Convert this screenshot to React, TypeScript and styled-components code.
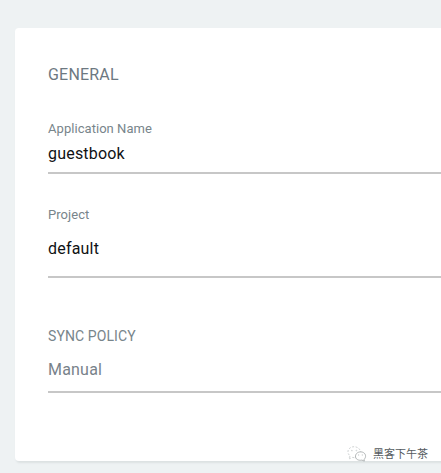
import React from 'react';
import styled, { createGlobalStyle } from 'styled-components';

const GlobalStyle = createGlobalStyle`
  * { box-sizing: border-box; }
  body {
    margin: 0;
    background: #eef2f3;
    font-family: Roboto, "Liberation Sans", sans-serif;
    overflow: hidden;
  }
`;

const Page = styled.main`
  height: 473px;
  padding: 28px 0 12px 15px;
  overflow: hidden;
`;

const Panel = styled.section`
  width: 460px;
  height: 433px;
  padding: 37px 0 0 33px;
  background: #fff;
  border-radius: 4px;
  box-shadow: 1px 2px 2px #dce1e2;
`;

const Heading = styled.h1`
  margin: 0 0 36px;
  font-size: 16px;
  letter-spacing: 0.2px;
  line-height: 20px;
  font-weight: 400;
  color: #6d7881;
`;

const Field = styled.div<{ $height: number }>`
  display: flex;
  flex-direction: column;
  align-items: flex-start;
  height: ${(p) => p.$height}px;
  border-bottom: 2px solid #c7c7c7;
`;

const Label = styled.label<{ $size?: number; $tracking?: number }>`
  font-size: ${(p) => p.$size ?? 13}px;
  letter-spacing: ${(p) => p.$tracking ?? 0.05}px;
  line-height: 16px;
  color: #78858b;
`;

const Value = styled.span<{ $gap: number; $muted?: boolean }>`
  margin-top: ${(p) => p.$gap}px;
  font-size: 16px;
  letter-spacing: 0.2px;
  line-height: 20px;
  color: ${(p) => (p.$muted ? '#78828a' : '#101214')};
`;

const Fields = styled.div`
  display: flex;
  flex-direction: column;
`;

const ProjectGroup = styled.div`
  margin: 33px 0 50px;
`;

const Watermark = styled.div`
  position: absolute;
  left: 347px;
  top: 443px;
  display: flex;
  align-items: center;
  gap: 6px;
  height: 20px;
  font-family: "Noto Sans CJK SC", sans-serif;
  font-size: 11px;
  line-height: 20px;
  color: #555b5e;
  white-space: nowrap;
`;

const ChatIcon = () => (
  <svg width="20" height="18" viewBox="0 0 20 18" fill="#fff" stroke="#c3c6c8" strokeWidth="0.8" strokeDasharray="2 1.5">
    <path d="M3 12 1.8 15l3.5-1.6c6 1.3 9.2-2 8.2-6.2C12.5 3.4 8 1.9 4.6 3.1.8 4.5-.5 8.7 3 12Z" />
    <path d="M17.2 15.2c2.1-2 1.8-5.1-.7-6.6-3.1-1.8-7.6-.2-8 3.3-.4 3.2 3 5 6.4 4.2l2.4 1Z" strokeDasharray="none" stroke="#9fa4a6" />
    <circle cx="5" cy="6.5" r=".5" />
    <circle cx="9.5" cy="6.3" r=".5" />
    <circle cx="11.7" cy="11" r=".3" />
    <circle cx="15.2" cy="11" r=".3" />
  </svg>
);

export default function App() {
  return (
    <>
      <GlobalStyle />
      <Page>
        <Panel>
          <Heading>GENERAL</Heading>
          <Fields>
            <Field $height={53}>
              <Label>Application Name</Label>
              <Value $gap={7}>guestbook</Value>
            </Field>
            <ProjectGroup>
              <Field $height={71}>
                <Label>Project</Label>
                <Value $gap={16}>default</Value>
              </Field>
            </ProjectGroup>
            <Field $height={65}>
              <Label $size={14} $tracking={0.1}>SYNC POLICY</Label>
              <Value $gap={16} $muted>Manual</Value>
            </Field>
          </Fields>
        </Panel>
      </Page>
      <Watermark>
        <ChatIcon />
        <span>黑客下午茶</span>
      </Watermark>
    </>
  );
}
